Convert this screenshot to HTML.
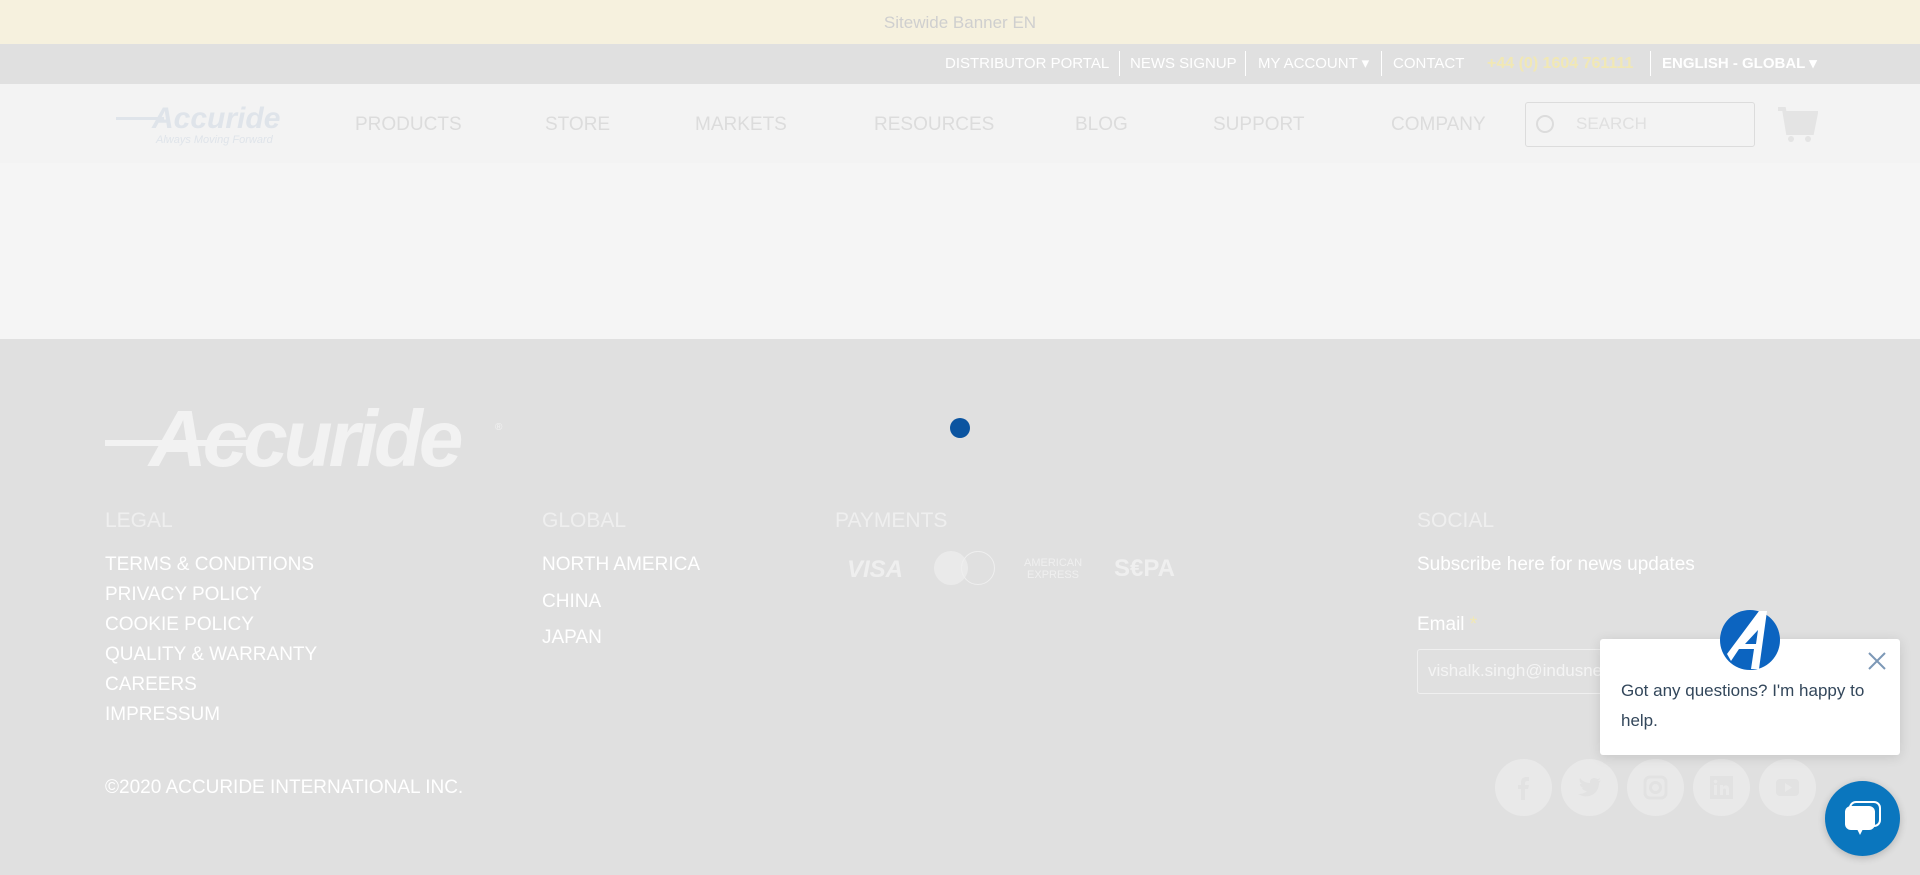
<!DOCTYPE html>
<html><head><meta charset="utf-8"><style>
*{margin:0;padding:0;box-sizing:border-box}
body{width:1920px;height:875px;overflow:hidden;font-family:"Liberation Sans",Arial,sans-serif;background:#e0e0e0;position:relative}
.a{position:absolute;white-space:nowrap}
.tl{color:#fff;font-size:15px;top:55px}
.nv{color:#dcdcdc;font-size:19px;top:114px}
.h{color:#efefef;font-size:21px;top:509px}
.l{color:#fff;font-size:19px}
.sc{position:absolute;width:57px;height:57px;border-radius:50%;background:#e9e9e9;top:759px}
.sc svg{position:absolute;left:16px;top:16px}
</style></head><body>
<div class="a" style="left:0;top:0;width:1920px;height:44px;background:#f6f1de"></div>
<div class="a" style="left:0;top:13px;width:1920px;text-align:center;color:#cfcfcf;font-size:17px">Sitewide Banner EN</div>
<div class="a" style="left:0;top:44px;width:1920px;height:40px;background:#e0e0e0"></div>
<div class="a tl" style="left:945px">DISTRIBUTOR PORTAL</div>
<div class="a" style="left:1119px;top:51px;width:1px;height:25px;background:#fff"></div>
<div class="a tl" style="left:1130px">NEWS SIGNUP</div>
<div class="a" style="left:1245px;top:51px;width:1px;height:25px;background:#fff"></div>
<div class="a tl" style="left:1258px;top:54px">MY ACCOUNT ▾</div>
<div class="a" style="left:1381px;top:51px;width:1px;height:25px;background:#fff"></div>
<div class="a tl" style="left:1393px">CONTACT</div>
<div class="a tl" style="left:1487px;color:#f1e8b4;font-weight:bold;font-size:16px">+44 (0) 1604 761111</div>
<div class="a" style="left:1650px;top:51px;width:1px;height:25px;background:#fff"></div>
<div class="a tl" style="left:1662px;top:54px;font-weight:bold">ENGLISH - GLOBAL ▾</div>
<div class="a" style="left:0;top:84px;width:1920px;height:79px;background:#f3f3f3"></div>
<div class="a" style="left:0;top:163px;width:1920px;height:176px;background:#f5f5f5"></div>
<svg class="a" style="left:116px;top:100px" width="186" height="46"><text x="36" y="28" font-family="Liberation Sans" font-style="italic" font-weight="bold" font-size="30" fill="#dfe4ea">Accuride</text><rect x="0" y="17" width="48" height="3" fill="#dfe4ea"/><text x="40" y="43" font-family="Liberation Sans" font-style="italic" font-size="11" fill="#dfe4ea">Always Moving Forward</text></svg>
<div class="a nv" style="left:355px">PRODUCTS</div>
<div class="a nv" style="left:545px">STORE</div>
<div class="a nv" style="left:695px">MARKETS</div>
<div class="a nv" style="left:874px">RESOURCES</div>
<div class="a nv" style="left:1075px">BLOG</div>
<div class="a nv" style="left:1213px">SUPPORT</div>
<div class="a nv" style="left:1391px">COMPANY</div>
<div class="a" style="left:1525px;top:102px;width:230px;height:45px;border:1px solid #dcdcdc;border-radius:3px"></div>
<svg class="a" style="left:1534px;top:113px" width="24" height="24"><circle cx="11" cy="11" r="8" fill="none" stroke="#dcdcdc" stroke-width="2"/></svg>
<div class="a" style="left:1576px;top:114px;color:#e0e0e0;font-size:17px">SEARCH</div>
<svg class="a" style="left:1776px;top:106px" width="42" height="38"><path d="M2 3h6l4 24h24l4-20H10" fill="none" stroke="#e4e4e4" stroke-width="4"/><circle cx="15" cy="33" r="3" fill="#e4e4e4"/><circle cx="32" cy="33" r="3" fill="#e4e4e4"/><path d="M10 8h30l-4 18H13z" fill="#e4e4e4"/></svg>
<svg class="a" style="left:105px;top:396px" width="405" height="74"><rect x="0" y="44" width="150" height="6" fill="#f2f2f2"/><text x="44" y="70" font-family="Liberation Sans" font-style="italic" font-weight="bold" font-size="80" fill="#f2f2f2" letter-spacing="-4">Accuride</text><text x="390" y="34" font-size="10" fill="#f2f2f2">®</text></svg>
<div class="a" style="left:950px;top:418px;width:20px;height:20px;border-radius:50%;background:#0b54a0"></div>
<div class="a h" style="left:105px">LEGAL</div>
<div class="a h" style="left:542px">GLOBAL</div>
<div class="a h" style="left:835px">PAYMENTS</div>
<div class="a h" style="left:1417px">SOCIAL</div>
<div class="a l" style="left:105px;top:554px">TERMS &amp; CONDITIONS</div>
<div class="a l" style="left:105px;top:584px">PRIVACY POLICY</div>
<div class="a l" style="left:105px;top:614px">COOKIE POLICY</div>
<div class="a l" style="left:105px;top:644px">QUALITY &amp; WARRANTY</div>
<div class="a l" style="left:105px;top:674px">CAREERS</div>
<div class="a l" style="left:105px;top:704px">IMPRESSUM</div>
<div class="a l" style="left:542px;top:554px">NORTH AMERICA</div>
<div class="a l" style="left:542px;top:591px">CHINA</div>
<div class="a l" style="left:542px;top:627px">JAPAN</div>
<div class="a" style="left:847px;top:556px;color:#efefef;font-size:24px;font-weight:bold;font-style:italic">VISA</div>
<div class="a" style="left:934px;top:551px;width:34px;height:34px;border-radius:50%;background:#eaeaea"></div>
<div class="a" style="left:961px;top:551px;width:34px;height:34px;border-radius:50%;border:1px solid #efefef"></div>
<div class="a" style="left:1024px;top:557px;color:#efefef;font-size:11px;line-height:12px;text-align:center">AMERICAN<br>EXPRESS</div>
<div class="a" style="left:1114px;top:555px;color:#efefef;font-size:24px;font-weight:bold">S€PA</div>
<div class="a l" style="left:1417px;top:554px">Subscribe here for news updates</div>
<div class="a l" style="left:1417px;top:614px">Email <span style="color:#f1e8b4">*</span></div>
<div class="a" style="left:1417px;top:649px;width:400px;height:45px;border:1px solid #f0f0f0;border-radius:3px"></div>
<div class="a" style="left:1428px;top:661px;color:#f4f4f4;font-size:17px">vishalk.singh@indusnet.co.in</div>
<div class="a l" style="left:105px;top:777px">©2020 ACCURIDE INTERNATIONAL INC.</div>
<div class="sc" style="left:1495px"><svg width="25" height="25"><path d="M10 25V14H7v-4h3V7c0-3 2-5 5-5h3v4h-2c-1 0-2 1-2 2v2h4l-1 4h-3v11z" fill="#e2e2e2"/></svg></div>
<div class="sc" style="left:1561px"><svg width="25" height="25"><path d="M24 5c-1 1-2 1-3 1 1-1 2-2 2-3-1 1-2 1-3 1-2-2-6-1-7 2v2C9 8 5 6 3 3c-1 2 0 5 2 6H3c0 2 2 4 4 4H5c1 2 3 3 5 3-2 2-5 3-9 3 10 6 21 0 21-11z" fill="#e2e2e2"/></svg></div>
<div class="sc" style="left:1627px"><svg width="25" height="25"><rect x="2" y="2" width="21" height="21" rx="5" fill="none" stroke="#e2e2e2" stroke-width="3"/><circle cx="12.5" cy="12.5" r="5" fill="none" stroke="#e2e2e2" stroke-width="3"/></svg></div>
<div class="sc" style="left:1693px"><svg width="25" height="25"><rect x="1" y="1" width="23" height="23" fill="#e2e2e2"/><rect x="5" y="10" width="3" height="10" fill="#e9e9e9"/><circle cx="6.5" cy="6.5" r="1.8" fill="#e9e9e9"/><path d="M11 10h3v2c1-2 6-3 6 2v6h-3v-5c0-2-3-2-3 0v5h-3z" fill="#e9e9e9"/></svg></div>
<div class="sc" style="left:1759px"><svg width="25" height="25"><rect x="1" y="4" width="23" height="17" rx="4" fill="#e2e2e2"/><path d="M10 8v9l7-4.5z" fill="#e9e9e9"/></svg></div>
<div class="a" style="left:1600px;top:639px;width:300px;height:116px;background:#fff;border-radius:3px;box-shadow:0 2px 12px rgba(0,0,0,.12)"></div>
<svg class="a" style="left:1719px;top:609px" width="62" height="62"><circle cx="31" cy="31" r="30" fill="#0c64c0"/><path d="M8 45L40 2h8L40 60h-8l3-20H20L12 52z" fill="#fff"/><path d="M26 35h11l2-14z" fill="#0c64c0"/></svg>
<svg class="a" style="left:1867px;top:651px" width="20" height="20"><path d="M2 2L18 18M18 2L2 18" stroke="#7c98b6" stroke-width="2"/></svg>
<div class="a" style="left:1621px;top:676px;color:#33475b;font-size:17px;line-height:30px">Got any questions? I'm happy to<br>help.</div>
<div class="a" style="left:1825px;top:781px;width:75px;height:75px;border-radius:50%;background:#0a76be;box-shadow:0 2px 8px rgba(0,0,0,.2)"></div>
<svg class="a" style="left:1843px;top:799px" width="40" height="40"><rect x="7" y="3" width="30" height="24" rx="6" fill="none" stroke="#fff" stroke-width="2"/><rect x="2" y="7" width="30" height="24" rx="6" fill="#fff"/><path d="M14 30l3 6 3-6z" fill="#fff"/></svg>
</body></html>
